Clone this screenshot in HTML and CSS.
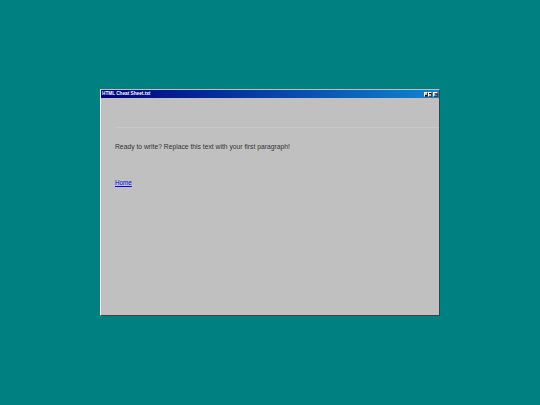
FILE: index.html
```html
<!DOCTYPE html>
<html>
<head>
<meta charset="utf-8">
<link rel="stylesheet" href="styles.css">
</head>
<body>
<div class="desktop">
  <div class="window">
    <div class="titlebar">
      <span class="title">HTML Cheat Sheet.txt</span>
      <div class="controls">
        <span class="btn min"><i></i></span><span class="btn max"><i></i></span><span class="btn close">&#215;</span>
      </div>
    </div>
    <div class="content">
      <hr class="rule">
      <p class="para">Ready to write? Replace this text with your first paragraph!</p>
      <a class="link" href="#">Home</a>
    </div>
  </div>
</div>
</body>
</html>
```
FILE: styles.css
```css
html, body {
  margin: 0;
  padding: 0;
}
.desktop {
  width: 540px;
  height: 405px;
  background: #008080;
  display: flex;
  align-items: center;
  justify-content: center;
}
.window {
  width: 340px;
  height: 227px;
  box-sizing: border-box;
  background: #c0c0c0;
  border-left: 1px solid #dfffff;
  border-top: 1px solid #c0c0c0;
  border-right: 1px solid #404040;
  border-bottom: 1px solid #404040;
  display: flex;
  flex-direction: column;
}
.titlebar {
  height: 8px;
  background: linear-gradient(to right, #000080, #1084d0);
  display: flex;
  align-items: center;
  justify-content: space-between;
  padding: 0 1px 0 1px;
}
.title {
  font-family: "Liberation Sans", Arial, sans-serif;
  font-size: 4.7px;
  font-weight: bold;
  color: #fff;
  line-height: 8px;
}
.controls {
  display: flex;
  align-items: center;
}
.btn {
  width: 4px;
  height: 5px;
  box-sizing: border-box;
  background: #c0c0c0;
  border: 1px solid;
  border-color: #fff #404040 #404040 #fff;
  position: relative;
  display: block;
}
.btn.max {
  margin-right: 1px;
}
.btn.close {
  width: 5px;
}
.btn.min i {
  position: absolute;
  left: 0;
  bottom: 0;
  width: 2px;
  height: 1px;
  background: #000;
}
.btn.max i {
  position: absolute;
  left: 0;
  top: 0;
  width: 2px;
  height: 1px;
  background: #000;
}
.btn.close {
  font-family: "DejaVu Sans", sans-serif;
  font-size: 5px;
  line-height: 3px;
  text-align: center;
  color: #000;
  font-weight: bold;
  overflow: hidden;
}
.content {
  flex: 1;
  padding: 0 0 0 14px;
}
.rule {
  margin: 29px 0 0 0;
  border: 0;
  height: 1px;
  background: #c8c8c8;
}
.para {
  font-family: "Liberation Sans", Arial, sans-serif;
  font-size: 6.75px;
  color: #333;
  margin: 14px 0 0 0;
  line-height: 9px;
}
.link {
  display: inline-block;
  margin-top: 28px;
  font-family: "Liberation Sans", Arial, sans-serif;
  font-size: 6.3px;
  color: #0000ee;
  text-decoration: underline;
}
```
